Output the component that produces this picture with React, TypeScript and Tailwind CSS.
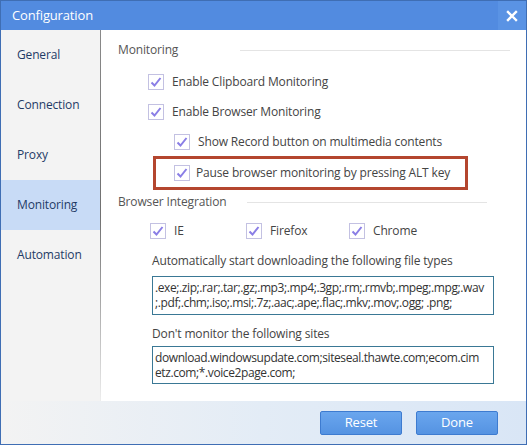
import React from 'react';

const Check = () => (
  <span className="w-4 h-4 border border-[#c3c1e2] bg-white flex items-center justify-center shrink-0">
    <svg width="12" height="12" viewBox="0 0 12 12">
      <path d="M1.5 6.5 L4.5 9.5 L10.5 2" fill="none" stroke="#8a7ee6" strokeWidth="2" />
    </svg>
  </span>
);

const CheckRow = ({ label, className = '' }: { label: string; className?: string }) => (
  <div className={`flex items-center h-[30px] ${className}`}>
    <Check />
    <span className="ml-[8px] whitespace-nowrap">{label}</span>
  </div>
);

const SectionHead = ({ title, lineClass }: { title: string; lineClass: string }) => (
  <div className="flex items-center h-[20px]">
    <span className="text-[#555]">{title}</span>
    <div className={`h-px bg-[#e4e4e4] ${lineClass}`} />
  </div>
);

const navItems = ['General', 'Connection', 'Proxy', 'Monitoring', 'Automation'];

export default function App() {
  return (
    <div
      className="w-[527px] h-[445px] bg-[#3f6eb4] p-px flex flex-col text-[12px] text-[#444] tracking-[-0.15px]"
      style={{ fontFamily: '"Open Sans", "Noto Sans", sans-serif' }}
    >
      {/* title bar */}
      <div className="h-[29px] bg-[#528be0] flex items-center justify-between shrink-0">
        <span className="pl-[11px] text-white text-[13px]">Configuration</span>
        <button className="w-[28px] h-[29px] bg-[#5a93e4] flex items-center justify-center">
          <svg width="12" height="12" viewBox="0 0 12 12">
            <path d="M2 2 L10 10 M10 2 L2 10" stroke="white" strokeWidth="2.4" strokeLinecap="square" />
          </svg>
        </button>
      </div>

      <div className="flex flex-1 bg-white">
        {/* sidebar */}
        <div className="w-[99px] bg-[#f3f3f3] flex flex-col">
          {navItems.map((n) => (
            <div
              key={n}
              className={`h-[50px] flex items-center pl-[16px] pb-px text-[#1f3b66] ${n === 'Monitoring' ? 'bg-[#c8dbf6]' : ''}`}
            >
              {n}
            </div>
          ))}
        </div>
        <div className="w-px bg-gradient-to-b from-[#8a8a8a] via-[#707070] to-[#eeeeee]" />

        {/* content */}
        <div className="flex-1 pl-[17px] pt-[10px] flex flex-col">
          <SectionHead title="Monitoring" lineClass="ml-[62px] w-[270px]" />
          <div className="pl-[30px] flex flex-col mt-[7px]">
            <CheckRow label="Enable Clipboard Monitoring" />
            <CheckRow label="Enable Browser Monitoring" />
            <CheckRow label="Show Record button on multimedia contents" className="pl-[26px]" />
            <div className="ml-[5px] mt-[-1px] w-[315px] h-[34px] border-[3px] border-[#b4462f] flex items-center pl-[18px]">
              <Check />
              <span className="ml-[6px] whitespace-nowrap">Pause browser monitoring by pressing ALT key</span>
            </div>
          </div>
          <div className="mt-[2px]">
            <SectionHead title="Browser Integration" lineClass="ml-[20px] w-[240px]" />
          </div>
          <div className="pl-[32px] flex mt-[4px]">
            <CheckRow label="IE" className="w-[96px]" />
            <CheckRow label="Firefox" className="w-[103px]" />
            <CheckRow label="Chrome" />
          </div>
          <div className="pl-[34px] flex flex-col">
            <div className="h-[20px] mt-[5px] flex items-center">Automatically start downloading the following file types</div>
            <div className="mt-[5px] w-[342px] h-[39px] border border-[#3a7895] px-[2px] pt-[3px] text-[12px] leading-[15px] text-[#333] tracking-[-0.4px]">
              <div>.exe;.zip;.rar;.tar;.gz;.mp3;.mp4;.3gp;.rm;.rmvb;.mpeg;.mpg;.wav</div>
              <div>;.pdf;.chm;.iso;.msi;.7z;.aac;.ape;.flac;.mkv;.mov;.ogg; .png;</div>
            </div>
            <div className="h-[20px] mt-[9px] flex items-center">Don't monitor the following sites</div>
            <div className="mt-[2px] w-[342px] h-[38px] border border-[#3a7895] px-[2px] pt-[3px] text-[12px] leading-[15px] text-[#333] tracking-[-0.4px]">
              <div>download.windowsupdate.com;siteseal.thawte.com;ecom.cim</div>
              <div>etz.com;*.voice2page.com;</div>
            </div>
          </div>
        </div>
      </div>

      {/* footer */}
      <div className="h-[43px] shrink-0 bg-gradient-to-r from-[#f3f3f3] via-[#e3ecf6] to-[#d9e6f6] flex items-center justify-end pr-[28px] gap-[14px]">
        <button className="w-[82px] h-[24px] rounded-[2px] border border-[#3d7bd0] bg-gradient-to-b from-[#6aa6ee] to-[#5593e2] text-white text-[13px]">
          Reset
        </button>
        <button className="w-[82px] h-[24px] rounded-[2px] border border-[#3d7bd0] bg-gradient-to-b from-[#6aa6ee] to-[#5593e2] text-white text-[13px]">
          Done
        </button>
      </div>
    </div>
  );
}
